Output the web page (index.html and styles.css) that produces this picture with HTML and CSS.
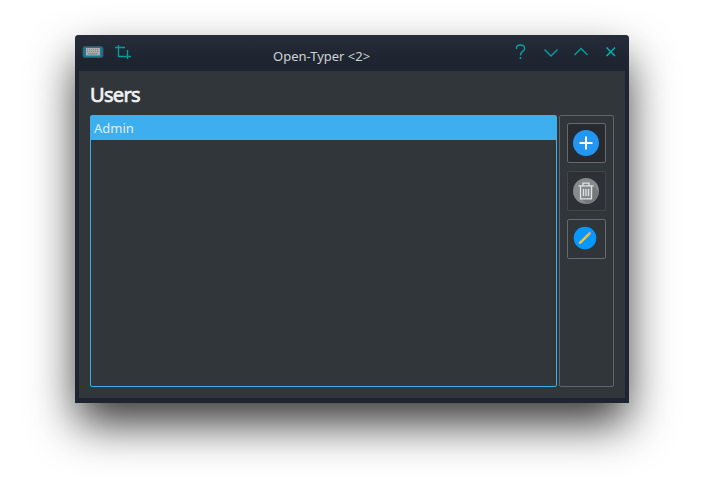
FILE: index.html
```html
<!DOCTYPE html>
<html lang="en">
<head>
<meta charset="utf-8">
<title>Open-Typer</title>
<link rel="stylesheet" href="styles.css">
</head>
<body>
<main class="window">
  <header class="titlebar">
    <div class="left-tools">
      <svg class="keyboard" width="22" height="14" viewBox="0 0 22 14">
        <rect x="1" y="1.500" width="20" height="11" rx="2" fill="#197998" stroke="#43515b"/>
        <rect x="4" y="3" width="14" height="7.500" fill="#a9abac"/>
        <path d="M5 4.500h12M5 6.500h12M6 8.500h10" stroke="#858a8c" stroke-dasharray="1 1"/>
        <path d="M7 9h8" stroke="#888" />
      </svg>
      <svg class="crop" width="16" height="14" viewBox="0 0 16 14">
        <path d="M0 2.500H10M3.500 0V11.500H16M12.500 5V14" fill="none" stroke="#009d9d" stroke-width="1.400"/>
      </svg>
    </div>
    <h1 class="title">Open-Typer &lt;2&gt;</h1>
    <div class="controls">
      <svg class="control" viewBox="0 0 30 30"><path d="M7.500 12V11C7.500 7 15.500 7 15.500 11V12C15.500 14.500 11.500 14 11.500 18.500M11.500 20V22"/></svg>
      <svg class="control" viewBox="0 0 30 30"><path d="M5.500 12.500L12 19L18.500 12.500"/></svg>
      <svg class="control" viewBox="0 0 30 30"><path d="M5.500 18L12 11.500L18.500 18"/></svg>
      <svg class="control close" viewBox="0 0 30 30"><path d="M7.500 10.500L16 19M16 10.500L7.500 19"/></svg>
    </div>
  </header>
  <section class="content">
    <h2 class="heading">Users</h2>
    <div class="panels">
      <ul class="users"><li class="user">Admin</li></ul>
      <div class="actions">
        <button class="action" aria-label="Add">
          <svg width="26" height="26" viewBox="0 0 26 26"><circle cx="13" cy="13" r="13" fill="#2196f3"/><path d="M13 6.500V19.500M6.500 13H19.500" stroke="#fff" stroke-width="2"/></svg>
        </button>
        <button class="action disabled" aria-label="Delete">
          <svg width="26" height="26" viewBox="0 0 26 26"><circle cx="13" cy="13" r="13" fill="#858a8d"/><path d="M20 8L25.500 13.500A13 13 0 0 1 14 26L8 20.500H19z" fill="#74797c"/><path d="M5.500 7.800H20.500M10 7.500V5.200H16V7.500M7.500 8V20.800H18.500V8M10.500 11V18M13 11V18M15.500 11V18" fill="none" stroke="#e0e2e3" stroke-width="1.300"/></svg>
        </button>
        <button class="action edit" aria-label="Edit">
          <svg width="26" height="26" viewBox="0 0 26 26"><circle cx="12" cy="12" r="11.300" fill="#0598ff"/><path d="M7 16.800L16.200 7.800" stroke="#fdc12e" stroke-width="2.500"/><path d="M15.800 8.200L17.500 6.500" stroke="#e9a18c" stroke-width="2.500"/><path d="M5.600 18.200L6.300 15.600L8.200 17.500z" fill="#f2b49a"/></svg>
        </button>
      </div>
    </div>
  </section>
</main>
</body>
</html>
```
FILE: styles.css
```css
* { box-sizing: border-box; }
body {
  margin: 0;
  height: 488px;
  padding: 35px 75px 0;
  overflow: hidden;
  background: #fff;
  font-family: "Noto Sans", sans-serif;
}
.window {
  width: 554px;
  height: 368px;
  padding: 0 4px 5px;
  display: flex;
  flex-direction: column;
  background: #1f2530;
  border-radius: 4px 4px 0 0;
  box-shadow: 0 22px 46px -2px rgba(0, 0, 0, .8);
}
.titlebar {
  height: 36px;
  margin: 0 -4px;
  display: grid;
  grid-template-columns: 125px 1fr 125px;
  background: linear-gradient(#262c38, #1f2530 65%);
  border-radius: 4px 4px 0 0;
}
.left-tools { display: flex; padding: 10px 0 0 7px; }
.crop { margin-left: 11px; }
.title {
  margin: 0;
  padding: 12px 0 0 73px;
  font-size: 13px;
  line-height: 18px;
  font-weight: 400;
  color: #cbd4d6;
  white-space: nowrap;
}
.controls { display: flex; margin-left: 5px; padding-top: 2px; }
.control {
  flex: 0 0 30px;
  height: 30px;
  fill: none;
  stroke: #00a3a3;
  stroke-width: 1.4;
}
.close { stroke: #00b0b0; stroke-width: 1.5; }
.content {
  flex: 1;
  padding: 9px 11px 11px;
  background: #31363a;
}
.heading {
  margin: 0 0 5px;
  height: 30px;
  font-size: 20px;
  line-height: 30px;
  font-weight: 400;
  letter-spacing: -.7px;
  color: #f1f2f2;
  -webkit-text-stroke: .7px #f1f2f2;
}
.panels { display: flex; gap: 2px; height: 272px; }
.users {
  width: 467px;
  margin: 0;
  padding: 0;
  list-style: none;
  border: 1px solid #3daee9;
  border-radius: 2px;
}
.user {
  height: 24px;
  padding-left: 3px;
  background: #3daeee;
  color: #e2edf2;
  font-size: 13px;
  line-height: 24px;
}
.actions {
  width: 55px;
  padding: 7px;
  display: flex;
  flex-direction: column;
  gap: 8px;
  border: 1px solid #616568;
  border-radius: 2px;
}
.action {
  width: 39px;
  height: 40px;
  padding: 0 1px 0 0;
  display: grid;
  place-items: center;
  background: #272b2f;
  border: 1px solid #666a6d;
  border-radius: 2px;
}
.disabled { background: #2d3135; border-color: #42464a; }
.edit { background: #303539; }
```
